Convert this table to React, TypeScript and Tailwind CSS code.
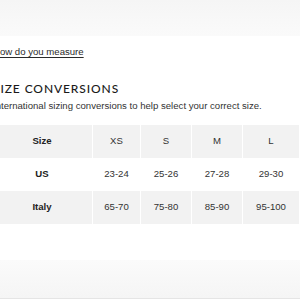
import React from "react";

const sizes = ["XS", "S", "M", "L"];
const rows = [
  { label: "US", values: ["23-24", "25-26", "27-28", "29-30"], shaded: false },
  { label: "Italy", values: ["65-70", "75-80", "85-90", "95-100"], shaded: true },
];
const widths = ["w-[100px]", "w-[47px]", "w-[50px]", "w-[50px]", "w-[56px]"];

export default function App() {
  return (
    <div className="w-[300px] h-[299px] overflow-hidden bg-white text-[#2a2a2a] [font-family:'Liberation_Sans',Arial,sans-serif]">
      <div className="h-[36px] bg-gradient-to-b from-[#f5f5f5] to-[#fafafa]" />
      <div className="ml-[-7px]">
        <a href="#" className="block mt-[10px] text-[9.6px] leading-[12px] underline underline-offset-2 text-[#2a2a2a]">
          How do you measure
        </a>
        <h2 className="mt-[23px] text-[12px] leading-[15px] tracking-[0.9px] font-medium text-[#1a1a1a] [font-family:Lato,'Liberation_Sans',sans-serif]">
          SIZE CONVERSIONS
        </h2>
        <p className="mt-[4px] text-[9.6px] leading-[12px] text-[#333]">
          International sizing conversions to help select your correct size.
        </p>
      </div>
      <div className="ml-[-8px] mt-[13px] flex flex-col text-[9.6px] text-[#333]">
        <div className="flex h-[33px] gap-x-[1px]">
          {["Size", ...sizes].map((s, i) => (
            <div
              key={s}
              className={`${widths[i]} shrink-0 flex items-center justify-center bg-[#f2f2f2] ${i === 0 ? "font-bold text-[#222]" : ""}`}
            >
              {s}
            </div>
          ))}
        </div>
        {rows.map((r) => (
          <div key={r.label} className="flex h-[33px] gap-x-[1px]">
            {[r.label, ...r.values].map((v, i) => (
              <div
                key={i}
                className={`${widths[i]} shrink-0 flex items-center justify-center ${r.shaded ? "bg-[#f2f2f2]" : "bg-white"} ${i === 0 ? "font-bold text-[#222]" : ""}`}
              >
                {v}
              </div>
            ))}
          </div>
        ))}
      </div>
      <div className="mt-[36px] h-[39px] bg-gradient-to-b from-[#fbfbfb] to-[#f5f5f5] border-b border-[#e5e5e5]" />
    </div>
  );
}
